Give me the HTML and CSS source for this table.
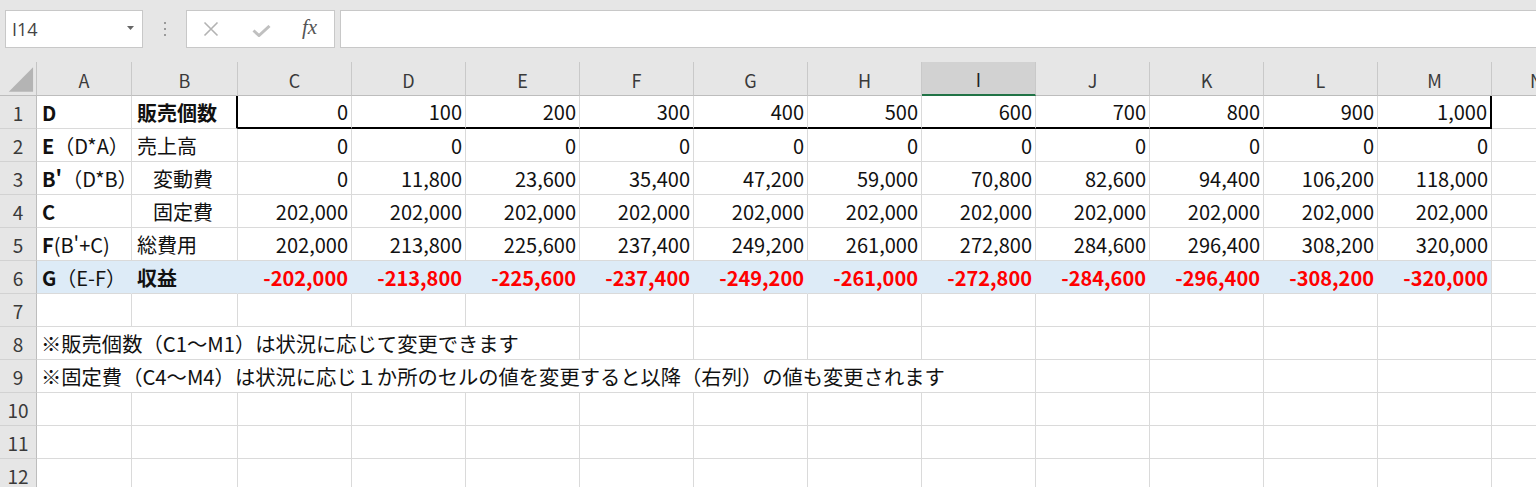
FILE: index.html
```html
<!DOCTYPE html>
<html lang="ja">
<head>
<meta charset="utf-8">
<title>損益分岐表</title>
<link rel="stylesheet" href="styles.css">
</head>
<body>
<div class="toolbar">
  <div class="namebox"><span class="nb-text">I14</span><svg class="nb-arrow" width="7" height="4" viewBox="0 0 7 4"><path d="M0 0H7L3.5 4Z" fill="#666"/></svg></div>
  <div class="dots"><span></span><span></span><span></span></div>
  <div class="fxbox">
    <svg class="ico" width="16" height="16" viewBox="0 0 16 16"><path d="M1.5 1.5L14.5 14.5M14.5 1.5L1.5 14.5" stroke="#b3b3b3" stroke-width="1.6" fill="none"/></svg>
    <svg class="ico" width="19" height="12" viewBox="0 0 19 12"><path d="M1.5 5.5L7 10.5L17.5 1" stroke="#c0c0c0" stroke-width="3" fill="none"/></svg>
    <span class="fx">fx</span>
  </div>
  <div class="formula"></div>
</div>
<div class="sheet">
  <div class="corner"><svg width="37" height="34" viewBox="0 0 37 34"><path d="M9 30L34 5V30Z" fill="#b4b4b4"/></svg></div>
  <div class="ch">A</div><div class="ch">B</div><div class="ch">C</div><div class="ch">D</div><div class="ch">E</div><div class="ch">F</div><div class="ch">G</div><div class="ch">H</div><div class="ch sel">I</div><div class="ch">J</div><div class="ch">K</div><div class="ch">L</div><div class="ch">M</div><div class="ch">N</div>

  <div class="rh">1</div>
  <div class="c b">D</div><div class="c b bl">販売個数</div>
  <div class="c n r1">0</div><div class="c n r1">100</div><div class="c n r1">200</div><div class="c n r1">300</div><div class="c n r1">400</div><div class="c n r1">500</div><div class="c n r1">600</div><div class="c n r1">700</div><div class="c n r1">800</div><div class="c n r1">900</div><div class="c n r1 rr">1,000</div><div class="c"></div>

  <div class="rh">2</div>
  <div class="c"><b>E</b>（D*A）</div><div class="c">売上高</div>
  <div class="c n">0</div><div class="c n">0</div><div class="c n">0</div><div class="c n">0</div><div class="c n">0</div><div class="c n">0</div><div class="c n">0</div><div class="c n">0</div><div class="c n">0</div><div class="c n">0</div><div class="c n">0</div><div class="c"></div>

  <div class="rh">3</div>
  <div class="c"><b>B'</b>（D*B）</div><div class="c ind">変動費</div>
  <div class="c n">0</div><div class="c n">11,800</div><div class="c n">23,600</div><div class="c n">35,400</div><div class="c n">47,200</div><div class="c n">59,000</div><div class="c n">70,800</div><div class="c n">82,600</div><div class="c n">94,400</div><div class="c n">106,200</div><div class="c n">118,000</div><div class="c"></div>

  <div class="rh">4</div>
  <div class="c b">C</div><div class="c ind">固定費</div>
  <div class="c n">202,000</div><div class="c n">202,000</div><div class="c n">202,000</div><div class="c n">202,000</div><div class="c n">202,000</div><div class="c n">202,000</div><div class="c n">202,000</div><div class="c n">202,000</div><div class="c n">202,000</div><div class="c n">202,000</div><div class="c n">202,000</div><div class="c"></div>

  <div class="rh">5</div>
  <div class="c"><b>F</b>(B'+C)</div><div class="c">総費用</div>
  <div class="c n">202,000</div><div class="c n">213,800</div><div class="c n">225,600</div><div class="c n">237,400</div><div class="c n">249,200</div><div class="c n">261,000</div><div class="c n">272,800</div><div class="c n">284,600</div><div class="c n">296,400</div><div class="c n">308,200</div><div class="c n">320,000</div><div class="c"></div>

  <div class="rh">6</div>
  <div class="c hl"><b>G</b>（E-F）</div><div class="c hl b">収益</div>
  <div class="c n hl neg">-202,000</div><div class="c n hl neg">-213,800</div><div class="c n hl neg">-225,600</div><div class="c n hl neg">-237,400</div><div class="c n hl neg">-249,200</div><div class="c n hl neg">-261,000</div><div class="c n hl neg">-272,800</div><div class="c n hl neg">-284,600</div><div class="c n hl neg">-296,400</div><div class="c n hl neg">-308,200</div><div class="c n hl neg last">-320,000</div><div class="c"></div>

  <div class="rh">7</div>
  <div class="c"></div><div class="c"></div><div class="c"></div><div class="c"></div><div class="c"></div><div class="c"></div><div class="c"></div><div class="c"></div><div class="c"></div><div class="c"></div><div class="c"></div><div class="c"></div><div class="c"></div><div class="c"></div>

  <div class="rh">8</div>
  <div class="c span5 note">※販売個数（C1～M1）は状況に応じて変更できます</div>
  <div class="c"></div><div class="c"></div><div class="c"></div><div class="c"></div><div class="c"></div><div class="c"></div><div class="c"></div><div class="c"></div><div class="c"></div>

  <div class="rh">9</div>
  <div class="c span9 note">※固定費（C4～M4）は状況に応じ１か所のセルの値を変更すると以降（右列）の値も変更されます</div>
  <div class="c"></div><div class="c"></div><div class="c"></div><div class="c"></div><div class="c"></div>

  <div class="rh">10</div>
  <div class="c"></div><div class="c"></div><div class="c"></div><div class="c"></div><div class="c"></div><div class="c"></div><div class="c"></div><div class="c"></div><div class="c"></div><div class="c"></div><div class="c"></div><div class="c"></div><div class="c"></div><div class="c"></div>

  <div class="rh">11</div>
  <div class="c"></div><div class="c"></div><div class="c"></div><div class="c"></div><div class="c"></div><div class="c"></div><div class="c"></div><div class="c"></div><div class="c"></div><div class="c"></div><div class="c"></div><div class="c"></div><div class="c"></div><div class="c"></div>

  <div class="rh">12</div>
  <div class="c"></div><div class="c"></div><div class="c"></div><div class="c"></div><div class="c"></div><div class="c"></div><div class="c"></div><div class="c"></div><div class="c"></div><div class="c"></div><div class="c"></div><div class="c"></div><div class="c"></div><div class="c"></div>
</div>
</body>
</html>
```

FILE: styles.css
```css
html, body {
  margin: 0;
  padding: 0;
  background: #ffffff;
  overflow: hidden;
  width: 1536px;
  height: 487px;
  font-family: "Noto Sans CJK JP", "Noto Sans", sans-serif;
  color: #111;
}

.toolbar {
  height: 62px;
  box-sizing: border-box;
  background: #e6e6e6;
  display: flex;
  align-items: flex-start;
  padding: 10px 0 0 5px;
}

.namebox {
  width: 138px;
  height: 38px;
  box-sizing: border-box;
  background: #fff;
  border: 1px solid #c8c8c8;
  display: flex;
  align-items: center;
  justify-content: space-between;
  padding: 0 8px 0 6px;
}

.nb-text {
  font-family: "Open Sans", "Noto Sans", sans-serif;
  font-size: 18px;
  color: #444;
}

.nb-arrow {
  margin-bottom: 3px;
}

.dots {
  width: 43px;
  height: 38px;
  display: flex;
  flex-direction: column;
  align-items: center;
  justify-content: center;
  gap: 4px;
}

.dots span {
  width: 2px;
  height: 2px;
  background: #9a9a9a;
}

.fxbox {
  width: 149px;
  height: 38px;
  box-sizing: border-box;
  background: #fff;
  border: 1px solid #c8c8c8;
  display: flex;
  align-items: center;
  padding-left: 16px;
}

.fxbox .ico:nth-child(2) {
  margin-left: 33px;
  margin-top: 4px;
}

.fx {
  margin-left: 31px;
  font-family: "Liberation Serif", serif;
  font-style: italic;
  font-size: 21px;
  color: #555;
  margin-top: -4px;
}

.formula {
  flex: 1;
  margin-left: 5px;
  height: 38px;
  box-sizing: border-box;
  background: #fff;
  border: 1px solid #c8c8c8;
  border-right: none;
}

.sheet {
  display: grid;
  grid-template-columns: 37px 95px 106px repeat(11, 114px) 90px;
  grid-template-rows: 34px repeat(12, 33px);
  width: max-content;
  font-size: 20px;
}

.corner {
  background: #e6e6e6;
  border-right: 1px solid #c4c4c4;
  border-bottom: 1px solid #bdbdbd;
  box-sizing: border-box;
  display: flex;
}

.ch {
  background: #e6e6e6;
  box-sizing: border-box;
  border-right: 1px solid #c9c9c9;
  border-bottom: 1px solid #bdbdbd;
  display: flex;
  align-items: center;
  justify-content: center;
  color: #3a3a3a;
  font-size: 18px;
  padding-top: 2px;
}

.ch.sel {
  background: #d2d2d2;
  border-bottom: 2px solid #217346;
  color: #222;
}

.rh {
  background: #e6e6e6;
  box-sizing: border-box;
  border-right: 1px solid #bdbdbd;
  border-bottom: 1px solid #d2d2d2;
  display: flex;
  align-items: center;
  justify-content: center;
  color: #3a3a3a;
  font-size: 19px;
}

.c {
  box-sizing: border-box;
  border-right: 1px solid #dadada;
  border-bottom: 1px solid #dadada;
  display: flex;
  align-items: center;
  padding: 0 4px 0 5px;
  white-space: nowrap;
  min-width: 0;
}

.c b, .b {
  font-weight: 700;
}

.n {
  justify-content: flex-end;
  padding-right: 3px;
}

.ind {
  padding-left: 21px;
}

.bl {
  border-right: 2px solid #000;
}

.r1 {
  border-bottom: 2px solid #000;
}

.rr {
  border-right: 2px solid #000;
}

.hl {
  background: #ddebf7;
  border-right-color: #ddebf7;
}

.hl.last {
  border-right-color: #dadada;
}

.neg {
  color: #ff0000;
  font-weight: 700;
}

.note {
  font-size: 20.3px;
  padding-left: 4px;
}

.span5 {
  grid-column: span 5;
}

.span9 {
  grid-column: span 9;
}
```
